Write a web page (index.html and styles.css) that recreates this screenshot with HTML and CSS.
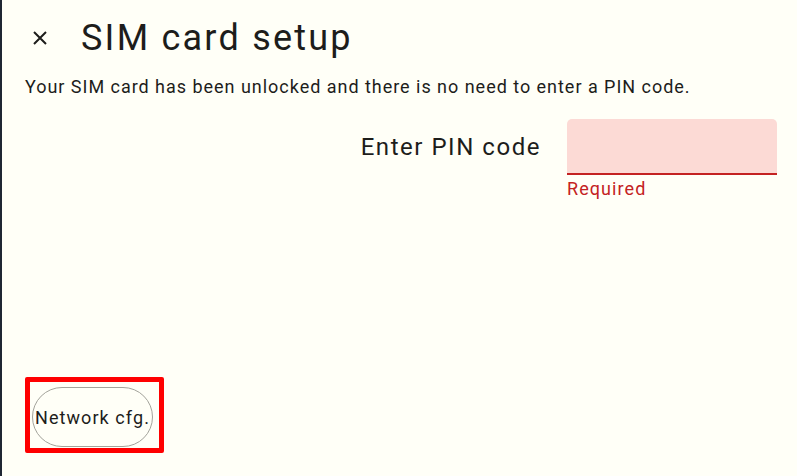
FILE: index.html
```html
<!DOCTYPE html>
<html lang="en">
<head>
<meta charset="utf-8">
<title>SIM card setup</title>
<link rel="stylesheet" href="styles.css">
</head>
<body>
<div class="page">
  <header class="title-row">
    <button class="close" aria-label="Close">
      <svg width="14" height="14" viewBox="0 0 14 14"><path d="M1 1L13 13M13 1L1 13" stroke="#1d1d1b" stroke-width="2" fill="none"/></svg>
    </button>
    <h1 class="title">SIM card setup</h1>
  </header>
  <p class="info">Your SIM card has been unlocked and there is no need to enter a PIN code.</p>
  <div class="pin-row">
    <label class="pin-label" for="pin">Enter PIN code</label>
    <div class="field">
      <input id="pin" class="pin-input" type="password">
      <div class="error">Required</div>
    </div>
  </div>
  <div class="footer">
    <div class="focus-ring">
      <button class="net-btn">Network cfg.</button>
    </div>
  </div>
</div>
</body>
</html>
```
FILE: styles.css
```css
html, body {
  margin: 0;
  padding: 0;
  height: 100%;
  background: #fffff7;
}
body {
  font-family: Roboto, "Liberation Sans", sans-serif;
  color: #1d1d1b;
}
.page {
  box-sizing: border-box;
  height: 100vh;
  border-left: 2px solid #1f2633;
  display: flex;
  flex-direction: column;
  padding: 14px 20px 23px 23px;
}
.title-row {
  display: flex;
  align-items: center;
  height: 48px;
}
.close {
  width: 14px;
  height: 14px;
  padding: 0;
  margin: 0 34px 0 8px;
  border: 0;
  background: none;
  display: flex;
}
.title {
  margin: 0;
  font-size: 36px;
  font-weight: 400;
  line-height: 48px;
  letter-spacing: 0.062em;
}
.info {
  margin: 13px 0 0 0;
  font-size: 18px;
  line-height: 24px;
  letter-spacing: 0.054em;
}
.pin-row {
  margin-top: 20px;
  display: flex;
  justify-content: flex-end;
  align-items: flex-start;
  gap: 26px;
}
.pin-label {
  font-size: 24px;
  line-height: 56px;
  letter-spacing: 0.064em;
}
.field {
  width: 210px;
}
.pin-input {
  display: block;
  box-sizing: border-box;
  width: 210px;
  height: 56px;
  margin: 0;
  border: 0;
  border-bottom: 2px solid #c42222;
  border-radius: 5px 5px 0 0;
  background: #fcdad5;
  outline: none;
}
.error {
  margin-top: 2px;
  font-size: 18px;
  line-height: 24px;
  letter-spacing: 0.06em;
  color: #c42222;
}
.footer {
  margin-top: auto;
  display: flex;
}
.focus-ring {
  border: 5px solid #ff0000;
  border-radius: 2px;
  padding: 5px 6px 1px 2px;
  display: flex;
}
.net-btn {
  box-sizing: border-box;
  width: 121px;
  height: 60px;
  padding: 0;
  border: 1px solid #a3a39b;
  border-radius: 30px;
  background: #fffff7;
  font-family: Roboto, "Liberation Sans", sans-serif;
  font-size: 18px;
  letter-spacing: 0.06em;
  color: #1d1d1b;
  white-space: nowrap;
  display: flex;
  align-items: center;
  justify-content: center;
}
```
